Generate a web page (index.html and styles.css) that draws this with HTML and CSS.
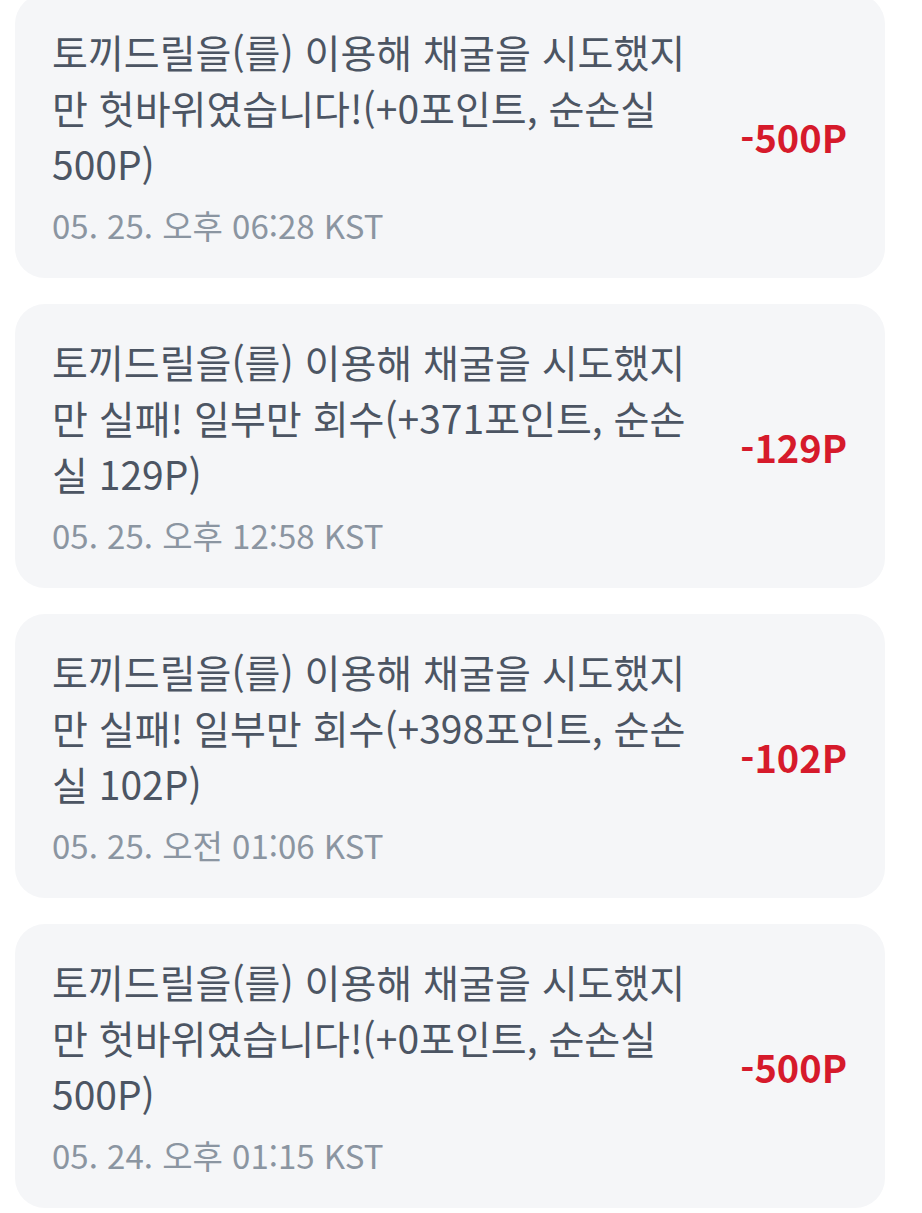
FILE: index.html
```html
<!DOCTYPE html>
<html lang="ko">
<head>
    <meta charset="UTF-8">
    <meta name="viewport" content="width=device-width, initial-scale=1.0">
    <title>포인트 내역</title>
    <link rel="stylesheet" href="styles.css">
</head>
<body>
    <!-- 포인트 사용 내역 -->
    <ul class="history">
        <li class="item">
            <div class="info">
                <p class="desc">토끼드릴을(를) 이용해 채굴을 시도했지만 헛바위였습니다!(+0포인트, 순손실 500P)</p>
                <p class="date">05. 25. 오후 06:28 KST</p>
            </div>
            <span class="amount">-500P</span>
        </li>
        <li class="item">
            <div class="info">
                <p class="desc">토끼드릴을(를) 이용해 채굴을 시도했지만 실패! 일부만 회수(+371포인트, 순손실 129P)</p>
                <p class="date">05. 25. 오후 12:58 KST</p>
            </div>
            <span class="amount">-129P</span>
        </li>
        <li class="item">
            <div class="info">
                <p class="desc">토끼드릴을(를) 이용해 채굴을 시도했지만 실패! 일부만 회수(+398포인트, 순손실 102P)</p>
                <p class="date">05. 25. 오전 01:06 KST</p>
            </div>
            <span class="amount">-102P</span>
        </li>
        <li class="item">
            <div class="info">
                <p class="desc">토끼드릴을(를) 이용해 채굴을 시도했지만 헛바위였습니다!(+0포인트, 순손실 500P)</p>
                <p class="date">05. 24. 오후 01:15 KST</p>
            </div>
            <span class="amount">-500P</span>
        </li>
    </ul>
</body>
</html>
```

FILE: styles.css
```css
body {
    margin: 0;
    background: #ffffff;
    font-family: 'Noto Sans CJK KR', 'Noto Sans', sans-serif;
    overflow: hidden;
}

.history {
    list-style: none;
    margin: -6px 0 0 0;
    padding: 0 37px 0 15px;
    display: flex;
    flex-direction: column;
    gap: 26px;
}

.item {
    background: #f5f6f8;
    border-radius: 30px;
    padding: 29px 38px 28px 37px;
    display: flex;
    align-items: center;
    gap: 44px;
}

.info {
    flex: 1;
}

.desc {
    margin: 0;
    font-size: 39px;
    line-height: 56px;
    color: #4c5563;
}

.date {
    margin: 9px 0 0 0;
    font-size: 33px;
    line-height: 50px;
    color: #8b95a1;
}

.amount {
    font-size: 38px;
    font-weight: 700;
    color: #d61a2b;
    white-space: nowrap;
}
```
